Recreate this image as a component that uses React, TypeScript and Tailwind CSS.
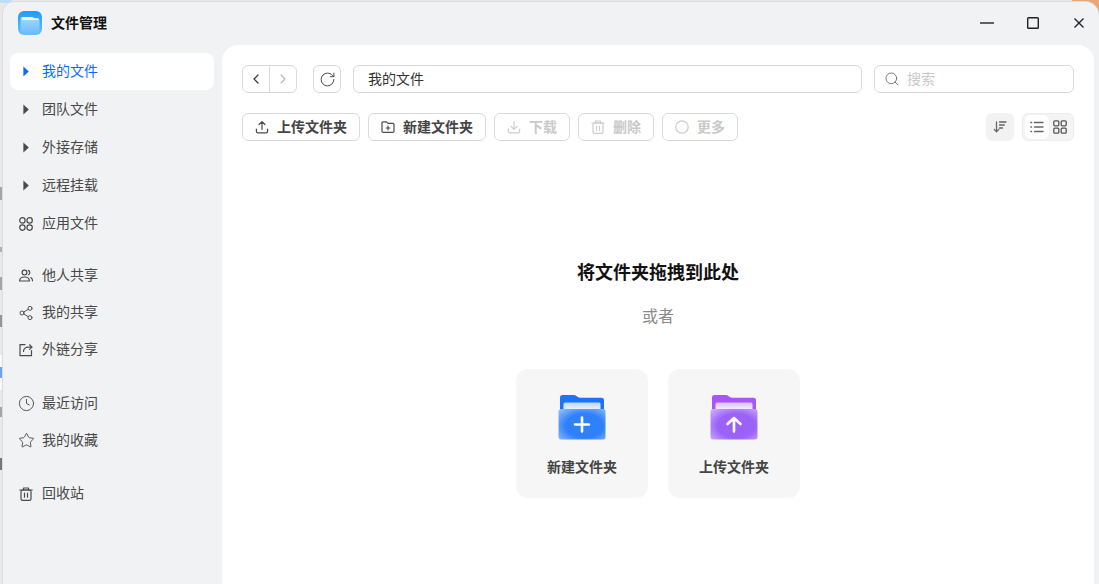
import React from "react";
import { ChevronLeft, ChevronRight, RotateCw, Search, Star, Clock, Share2 } from "lucide-react";

const S = ({ children, size = 16, className = "" }: { children: React.ReactNode; size?: number; className?: string }) => (
  <svg width={size} height={size} viewBox="0 0 16 16" fill="none" stroke="currentColor" strokeWidth="1.2" strokeLinecap="round" strokeLinejoin="round" className={className}>
    {children}
  </svg>
);

const Tri = () => (
  <svg width="6" height="11" viewBox="0 0 6 11" fill="currentColor"><path d="M0.4 0.4 L5.8 5.5 L0.4 10.6 Z" /></svg>
);

const AppsIcon = () => (
  <S><circle cx="4.4" cy="4.4" r="2.7" /><circle cx="11.6" cy="4.4" r="2.7" /><circle cx="4.4" cy="11.6" r="2.7" /><circle cx="11.6" cy="11.6" r="2.7" /></S>
);
const PeopleIcon = () => (
  <S><circle cx="6.5" cy="4.6" r="2.4" /><path d="M1.6 13c0-2.6 2.2-4 4.9-4s4.9 1.4 4.9 4z" /><path d="M10.4 2.4a2.4 2.4 0 0 1 0 4.4M12.8 9.6c1 .6 1.7 1.6 1.7 3.2" /></S>
);
const ExtShareIcon = () => (
  <S><path d="M7 2.6H2v11h11.5V8.5" /><path d="M5.5 9.5c0-2.6 2-4.4 4.6-4.4h3.6" /><path d="M11.6 2.8l2.4 2.3-2.4 2.3" /></S>
);
const BinIcon = ({ size = 16 }: { size?: number }) => (
  <S size={size}><path d="M1.8 4h12.4" /><path d="M5.5 4V2h5v2" /><rect x="3" y="4" width="10" height="10.4" rx="1.6" /><path d="M6.5 7.2v4M9.5 7.2v4" /></S>
);

type Item = { label: string; icon: React.ReactNode; active?: boolean; tri?: boolean; cls: string };
const items: Item[] = [
  { label: "我的文件", icon: <Tri />, tri: true, active: true, cls: "" },
  { label: "团队文件", icon: <Tri />, tri: true, cls: "mt-px" },
  { label: "外接存储", icon: <Tri />, tri: true, cls: "mt-px" },
  { label: "远程挂载", icon: <Tri />, tri: true, cls: "mt-px" },
  { label: "应用文件", icon: <AppsIcon />, cls: "mt-px" },
  { label: "他人共享", icon: <PeopleIcon />, cls: "mt-[15px]" },
  { label: "我的共享", icon: <Share2 size={16} strokeWidth={1.4} />, cls: "" },
  { label: "外链分享", icon: <ExtShareIcon />, cls: "" },
  { label: "最近访问", icon: <Clock size={17} strokeWidth={1.3} />, cls: "mt-[17px]" },
  { label: "我的收藏", icon: <Star size={17} strokeWidth={1.3} />, cls: "" },
  { label: "回收站", icon: <BinIcon />, cls: "mt-4" },
];

const ToolBtn = ({ icon, label, disabled, w }: { icon: React.ReactNode; label: string; disabled?: boolean; w: string }) => (
  <div className={`${w} h-7 rounded-md border border-[#d9d9d9] flex items-center justify-center gap-[7px] pr-px text-[14px] font-semibold ${disabled ? "text-[#c9c9c9]" : "text-[#444444]"}`}>
    <span className={disabled ? "text-[#cccccc]" : "text-[#4a4a4a]"}>{icon}</span>
    <span className="pb-0.5">{label}</span>
  </div>
);

const FolderIcon = ({ id, tab, from, to, paper, children }: { id: string; tab: string; from: string; to: string; paper: string; children: React.ReactNode }) => (
  <svg width="48" height="46" viewBox="0 0 48 46">
    <defs>
      <linearGradient id={`${id}p`} x1="0" y1="0" x2="0" y2="1">
        <stop offset="0" stopColor={paper} />
        <stop offset="1" stopColor="#ffffff" />
      </linearGradient>
      <radialGradient id={`${id}f`} cx="0.55" cy="0.55" r="0.72">
        <stop offset="0" stopColor={from} />
        <stop offset="0.55" stopColor={from} />
        <stop offset="1" stopColor={to} />
      </radialGradient>
    </defs>
    <path d="M2 3.5A2.5 2.5 0 0 1 4.5 1h11.2c1 0 2 .5 3 1.2 1 .7 2 1.5 3.3 1.5H43.5A2.5 2.5 0 0 1 46 6.2V20H2z" fill={tab} />
    <rect x="5.5" y="8.5" width="37" height="10" rx="1.5" fill={`url(#${id}p)`} />
    <rect x="0.5" y="15" width="47" height="30.5" rx="2.5" fill={`url(#${id}f)`} />
    {children}
  </svg>
);

const Mark = ({ cls }: { cls: string }) => <div className={`absolute left-0 w-[2px] ${cls}`} />;

export default function App() {
  return (
    <div className="relative w-[1099px] h-[584px] overflow-hidden bg-[#e9e9ea] font-['Inter','Noto_Sans_CJK_SC',sans-serif]">
      {/* desktop behind the window */}
      <div className="absolute left-0 top-0 w-[12px] h-[3px] bg-[#bcdcf8]" />
      <div className="absolute right-0 top-0 w-[27px] h-[16px] bg-[#e5a877]" />
      <Mark cls="top-[187px] h-[13px] bg-[#a5a5a5]" />
      <Mark cls="top-[247px] h-[5px] bg-[#b0b0b0]" />
      <Mark cls="top-[277px] h-[13px] bg-[#a5a5a5]" />
      <Mark cls="top-[315px] h-[12px] bg-[#959595]" />
      <Mark cls="top-[355px] h-[35px] bg-[#fafafa]" />
      <Mark cls="top-[367px] h-[11px] bg-[#6ba3f8]" />
      <Mark cls="top-[407px] h-[10px] bg-[#a5a5a5]" />
      <Mark cls="top-[458px] h-[12px] bg-[#777777]" />

      <div className="relative ml-[2px] mt-px h-[583px] flex flex-col rounded-tl-xl rounded-tr-[14px] bg-[#f1f2f4] border-t border-l border-[#dcdcdc]">
        {/* title bar */}
        <div className="h-[43px] shrink-0 flex items-center pl-[15px] pr-[13px] pb-0.5">
          <svg width="24" height="24" viewBox="0 0 24 24">
            <defs>
              <linearGradient id="to" x1="0" y1="0" x2="0" y2="1">
                <stop offset="0" stopColor="#1e9bfa" />
                <stop offset="1" stopColor="#6cc0ff" />
              </linearGradient>
              <linearGradient id="ti" x1="0" y1="0" x2="0" y2="1">
                <stop offset="0" stopColor="#a2d9ff" />
                <stop offset="1" stopColor="#6dbdff" />
              </linearGradient>
            </defs>
            <rect width="24" height="24" rx="6" fill="url(#to)" />
            <path d="M2.5 8a2 2 0 0 1 2-2h9c1 0 1.5.9 2.5 1.3 1 .4 2 .3 3.5.3a2 2 0 0 1 2 2V19a3 3 0 0 1-3 3h-13a3 3 0 0 1-3-3z" fill="url(#ti)" />
            <path d="M4 6h10c1 0 1.5 1 2.5 1.3H20.500V9H4z" fill="#e8f5ff" />
          </svg>
          <span className="ml-[9px] text-[14px] font-bold text-[#111111]">文件管理</span>
          <div className="ml-auto flex items-center gap-8 text-[#222222]">
            <svg width="14" height="14" viewBox="0 0 14 14"><path d="M0 7h14" stroke="currentColor" strokeWidth="1.4" /></svg>
            <svg width="14" height="14" viewBox="0 0 14 14" fill="none"><rect x="1.7" y="1.7" width="10.6" height="10.6" rx="0.8" stroke="currentColor" strokeWidth="1.4" /></svg>
            <svg width="14" height="14" viewBox="0 0 14 14"><path d="M2.500 2.500l9 9M11.500 2.500l-9 9" stroke="currentColor" strokeWidth="1.4" /></svg>
          </div>
        </div>

        <div className="flex-1 min-h-0 flex">
          {/* sidebar */}
          <div className="w-[219px] shrink-0 pt-2 pl-[7px] pr-[8px]">
            {items.map((it) => (
              <div
                key={it.label}
                className={`${it.cls} h-[37px] flex items-center rounded-lg text-[14px] ${it.active ? "bg-white text-[#0b6bfa]" : "text-[#484848]"}`}
              >
                <span className={`w-8 shrink-0 flex items-center ${it.tri ? "pl-[13px]" : "pl-2"} ${it.active ? "text-[#0b6bfa]" : "text-[#4a4a4a]"}`}>
                  {it.icon}
                </span>
                <span className="pb-0.5">{it.label}</span>
              </div>
            ))}
          </div>

          {/* main */}
          <div className="flex-1 mr-[5px] rounded-t-2xl bg-white px-5 pt-5 flex flex-col">
            <div className="h-7 flex items-center">
              <div className="w-[55px] h-7 rounded-md border border-[#d9d9d9] flex">
                <div className="w-[27px] border-r border-[#d9d9d9] flex items-center justify-center text-[#333333]">
                  <ChevronLeft size={16} strokeWidth={1.8} />
                </div>
                <div className="flex-1 flex items-center justify-center text-[#b5b5b5]">
                  <ChevronRight size={16} strokeWidth={1.6} />
                </div>
              </div>
              <div className="ml-4 w-7 h-7 rounded-md border border-[#d9d9d9] flex items-center justify-center text-[#4a4a4a]">
                <RotateCw size={17} strokeWidth={1.4} />
              </div>
              <div className="ml-3 flex-1 h-7 rounded-md border border-[#d9d9d9] flex items-center pl-[14px] pb-0.5 text-[14px] text-[#333333]">我的文件</div>
              <div className="ml-3 w-[200px] h-7 rounded-md border border-[#d9d9d9] flex items-center pl-[9px] gap-[7px] text-[14px] text-[#c8c8c8]">
                <Search size={16} strokeWidth={1.3} className="text-[#666666]" />
                <span className="pb-0.5">搜索</span>
              </div>
            </div>

            <div className="mt-5 h-7 flex items-center gap-2">
              <ToolBtn w="w-[118px]" label="上传文件夹" icon={<S><path d="M8 10.5V3M5 5.5L8 2.6l3 2.9M2.400 10v2.200c0 .9.7 1.600 1.600 1.600h8c.9 0 1.600-.7 1.600-1.600V10" /></S>} />
              <ToolBtn w="w-[118px]" label="新建文件夹" icon={<S><path d="M2 4a1.200 1.200 0 0 1 1.200-1.200h3.200L8 4.400h4.800A1.200 1.200 0 0 1 14 5.600v6.600a1.200 1.200 0 0 1-1.200 1.200H3.200A1.200 1.200 0 0 1 2 12.200z" /><path d="M8 7.200v3.600M6.200 9h3.600" /></S>} />
              <ToolBtn w="w-[76px]" disabled label="下载" icon={<S><path d="M8 2.500V10M5 7.400L8 10.400l3-3M2.400 10v2.200c0 .9.7 1.600 1.600 1.600h8c.9 0 1.600-.7 1.600-1.600V10" /></S>} />
              <ToolBtn w="w-[76px]" disabled label="删除" icon={<BinIcon />} />
              <ToolBtn w="w-[76px]" disabled label="更多" icon={<S><circle cx="8" cy="8" r="6.200" /></S>} />
              <div className="ml-auto w-7 h-7 rounded-md bg-[#f2f2f2] flex items-center justify-center text-[#666666]">
                <S size={16}><path d="M4.500 3v9.600M2.200 10.400l2.300 2.400 2.300-2.400M7.500 3h6.500M7.500 6h4.800M7.500 9h3" strokeWidth="1.300" /></S>
              </div>
              <div className="w-[52px] h-7 rounded-md bg-[#f4f4f4] border border-[#eeeeee] flex items-center pl-0.5">
                <div className="w-6 h-6 rounded-md bg-white flex items-center justify-center text-[#666666]">
                  <S size={16}><path d="M5.500 3.500h8.500M5.500 8h8.500M5.500 12.500h8.500M1.800 3.500h.8M1.800 8h.8M1.800 12.500h.8" strokeWidth="1.300" /></S>
                </div>
                <div className="w-[22px] h-6 flex items-center justify-center text-[#555555]">
                  <svg width="14" height="14" viewBox="0 0 14 14" fill="none" stroke="currentColor" strokeWidth="1.3"><rect x="0.8" y="0.8" width="5" height="5" rx="1" /><rect x="8.200" y="0.8" width="5" height="5" rx="1" /><rect x="0.8" y="8.200" width="5" height="5" rx="1" /><rect x="8.200" y="8.200" width="5" height="5" rx="1" /></svg>
                </div>
              </div>
            </div>

            {/* empty state */}
            <div className="flex flex-col items-center">
              <div className="mt-[119px] h-[26px] leading-[26px] text-[18px] font-semibold text-[#111111]">将文件夹拖拽到此处</div>
              <div className="mt-[18px] h-6 leading-6 text-[16px] text-[#8a8a8a]">或者</div>
              <div className="mt-[41px] flex gap-5">
                <div className="w-[132px] h-[129px] rounded-xl bg-[#f6f6f6] flex flex-col items-center pt-[25px]">
                  <FolderIcon id="b" tab="#1c74fb" from="#2f80fb" to="#8dbcfd" paper="#bcd6fe">
                    <path d="M24 23.500v14M17 30.500h14" stroke="#ffffff" strokeWidth="2.600" strokeLinecap="round" />
                  </FolderIcon>
                  <div className="mt-[16px] text-[14px] font-semibold text-[#444444]">新建文件夹</div>
                </div>
                <div className="w-[132px] h-[129px] rounded-xl bg-[#f6f6f6] flex flex-col items-center pt-[25px]">
                  <FolderIcon id="p" tab="#a855fb" from="#9a62f8" to="#cdaafc" paper="#d9c2fd">
                    <path d="M24 37.500V24M17.500 30l6.500-6 6.500 6" stroke="#ffffff" strokeWidth="2.600" strokeLinecap="round" strokeLinejoin="round" fill="none" />
                  </FolderIcon>
                  <div className="mt-[16px] text-[14px] font-semibold text-[#444444]">上传文件夹</div>
                </div>
              </div>
            </div>
          </div>
        </div>
      </div>
    </div>
  );
}
